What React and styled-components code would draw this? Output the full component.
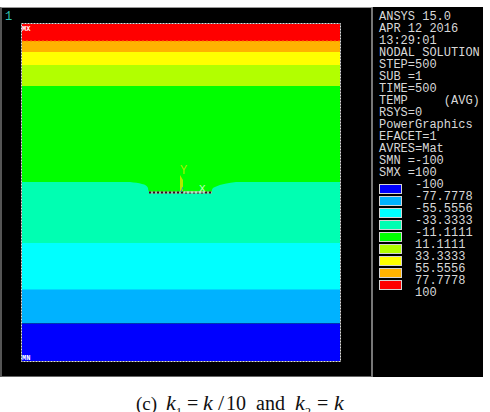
import React from "react";
import styled, { createGlobalStyle } from "styled-components";

const GlobalStyle = createGlobalStyle`
  body {
    margin: 0;
    background-color: #ffffff;
    overflow: hidden;
  }
`;

const Figure = styled.div`
  width: 490px;
  height: 412px;
  padding-top: 7px;
  box-sizing: border-box;
  overflow: hidden;
`;

const Screen = styled.div`
  display: flex;
  width: 483px;
  height: 370px;
  background-color: #000000;
`;

const PlotWindow = styled.div`
  display: flex;
  width: 373px;
  height: 370px;
  box-sizing: border-box;
  border: 2px solid #777777;
  border-top: 1px solid #999999;
  border-bottom: 1px solid #666666;
  border-left-color: #555555;
`;

const WindowNumber = styled.div`
  width: 18px;
  padding: 3px 0 0 3px;
  box-sizing: border-box;
  color: #2fc4b4;
  font-family: "Liberation Mono", monospace;
  font-size: 12px;
  line-height: 12px;
`;

const Contour = styled.svg`
  display: block;
  width: 322px;
  height: 341px;
  margin-top: 14px;

  text {
    font-family: "Liberation Mono", monospace;
  }
`;

const Info = styled.div`
  width: 110px;
  padding: 4px 0 0 6px;
  box-sizing: border-box;
  color: #d8d8d8;
  font-family: "Liberation Mono", monospace;
  font-size: 12px;
  line-height: 12px;
`;

const Line = styled.div`
  height: 12px;
  white-space: pre;
`;

const Legend = styled.div`
  display: flex;
`;

const Swatches = styled.div`
  display: flex;
  flex-direction: column;
  gap: 2px;
  width: 36px;
  padding-top: 5px;
`;

const Swatch = styled.div`
  width: 23px;
  height: 10px;
  box-sizing: border-box;
  border: 1px solid #d4d4d4;
  background-color: ${(props) => props.$color};
`;

const Caption = styled.div`
  display: flex;
  align-items: baseline;
  padding: 14px 0 0 136px;
  color: #111111;
  font-family: "Liberation Serif", serif;
  font-size: 20px;
  line-height: 24px;
  white-space: nowrap;
`;

const Term = styled.span`
  width: ${(props) => props.$width}px;
  font-size: ${(props) => props.$size || 20}px;
  font-style: ${(props) => (props.$italic ? "italic" : "normal")};
`;

const Sub = styled.span`
  position: relative;
  top: 6px;
  width: ${(props) => props.$width}px;
  font-size: 12px;
  line-height: 12px;
`;

const lines = [
  "ANSYS 15.0",
  "APR 12 2016",
  "13:29:01",
  "NODAL SOLUTION",
  "STEP=500",
  "SUB =1",
  "TIME=500",
  "TEMP     (AVG)",
  "RSYS=0",
  "PowerGraphics",
  "EFACET=1",
  "AVRES=Mat",
  "SMN =-100",
  "SMX =100",
];

const colors = [
  "#0000ff",
  "#00b2ff",
  "#00ffff",
  "#00ffb2",
  "#00ff00",
  "#b2ff00",
  "#ffff00",
  "#ffb200",
  "#ff0000",
];

const values = [
  "-100",
  "-77.7778",
  "-55.5556",
  "-33.3333",
  "-11.1111",
  "11.1111",
  "33.3333",
  "55.5556",
  "77.7778",
  "100",
];

const ContourPlot = () => {
  return (
    <Contour viewBox="20 22 322 341">
      <rect x="22" y="24" width="318" height="17" fill="#ff0000" />
      <rect x="22" y="41" width="318" height="11" fill="#ffb200" />
      <rect x="22" y="52" width="318" height="13" fill="#ffff00" />
      <rect x="22" y="65" width="318" height="21" fill="#b2ff00" />
      <rect x="22" y="86" width="318" height="107" fill="#00ff00" />
      <path
        d="M22 182H130C139 183 147 184 148 188Q148 192 151 193H212Q211 188 215 187C221 184 229 183 236 182H340V243H22Z"
        fill="#00ffb2"
      />
      <rect x="22" y="243" width="318" height="47" fill="#00ffff" />
      <rect x="22" y="289.5" width="318" height="34" fill="#00b2ff" />
      <rect x="22" y="323.5" width="318" height="38" fill="#0000ff" />
      <path d="M22 323.5H340" stroke="#0040a0" strokeDasharray="1 1" />
      <path d="M22 41H340" stroke="#ff7800" strokeDasharray="2 2" />

      {/* model outline */}
      <rect x="21.5" y="23.5" width="319" height="338" fill="none" stroke="#222222" />
      <rect
        x="21.5"
        y="23.5"
        width="319"
        height="338"
        fill="none"
        stroke="#e0e0e0"
        strokeDasharray="2 1"
      />

      {/* crack line and axis triad */}
      <path d="M149 192.5H212" stroke="#a0b8a8" strokeWidth="2" />
      <path d="M149 192.5H212" stroke="#3a1020" strokeWidth="2" strokeDasharray="2 2" />
      <path d="M184 192H204" stroke="#d8ffd8" />
      <path d="M180 191V175L183 180V191Z" fill="#b2e800" />
      <path d="M181 192L183 187" stroke="#16a4b4" />
      <text x="180" y="174" fontSize="12" fill="#a8f000">Y</text>
      <text x="199" y="192" fontSize="11" fill="#c0ffc0">X</text>

      <text x="22" y="31" fontSize="7" fontWeight="bold" fill="#ffffff">MX</text>
      <text x="22" y="360" fontSize="7" fontWeight="bold" fill="#ffffff">MN</text>
    </Contour>
  );
};

const App = () => {
  return (
    <>
      <GlobalStyle />
      <Figure>
        <Screen>
          <PlotWindow>
            <WindowNumber>1</WindowNumber>
            <ContourPlot />
          </PlotWindow>
          <Info>
            {lines.map((line) => (
              <Line key={line}>{line}</Line>
            ))}
            <Legend>
              <Swatches>
                {colors.map((color) => (
                  <Swatch key={color} $color={color} />
                ))}
              </Swatches>
              <div>
                {values.map((value) => (
                  <Line key={value}>{value}</Line>
                ))}
              </div>
            </Legend>
          </Info>
        </Screen>
        <Caption>
          <Term $width={30} $size={19}>(c)</Term>
          <Term $width={10} $size={22} $italic>k</Term>
          <Sub $width={11}>1</Sub>
          <Term $width={16}>=</Term>
          <Term $width={15} $size={22} $italic>k</Term>
          <Term $width={8} $size={22}>/</Term>
          <Term $width={30}>10</Term>
          <Term $width={39}>and</Term>
          <Term $width={10} $size={22} $italic>k</Term>
          <Sub $width={12}>2</Sub>
          <Term $width={17}>=</Term>
          <Term $width={12} $size={22} $italic>k</Term>
        </Caption>
      </Figure>
    </>
  );
};

export default App;
